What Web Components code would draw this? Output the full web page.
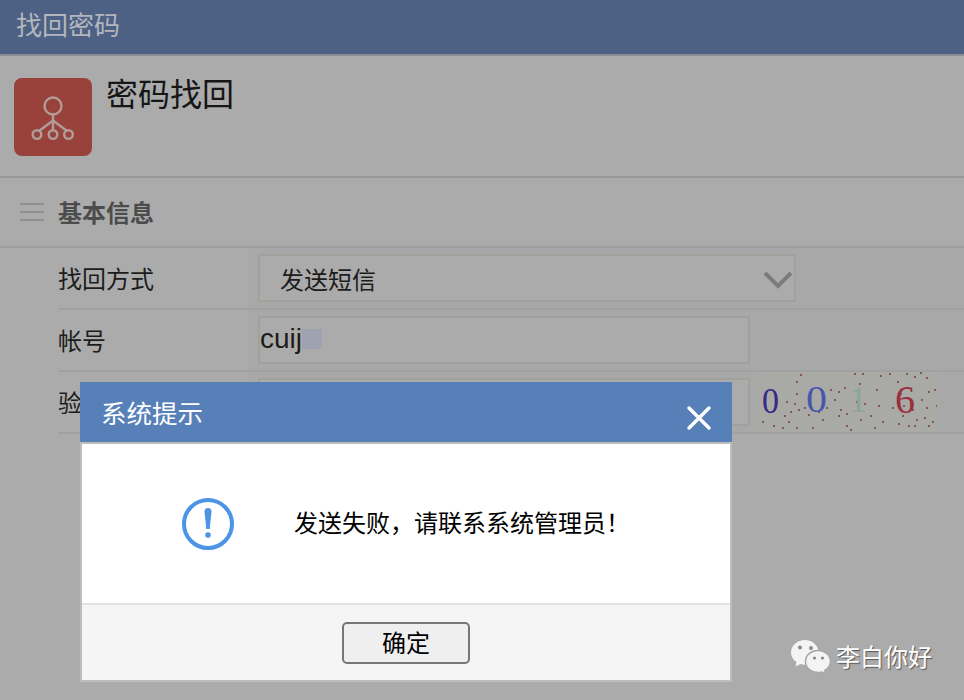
<!DOCTYPE html>
<html lang="zh">
<head>
<meta charset="utf-8">
<title>找回密码</title>
<style>
  html, body { margin: 0; height: 100%; }
  body {
    width: 964px;
    height: 700px;
    overflow: hidden;
    position: relative;
    background: #ababab;
    color: #1a1a1a;
    font-family: "Liberation Sans", "Noto Sans CJK SC", sans-serif;
  }
</style>
</head>
<body>
<app-bar>找回密码</app-bar>
<page-title>密码找回</page-title>
<section-head>基本信息</section-head>
<form-row label="找回方式"><select-box>发送短信</select-box></form-row>
<form-row label="帐号"><text-box>cuij</text-box></form-row>
<form-row label="验证码"><text-box></text-box><captcha-img></captcha-img></form-row>
<modal-dialog heading="系统提示" button="确定">发送失败，请联系系统管理员！</modal-dialog>
<wechat-mark>李白你好</wechat-mark>

<script>
class AppBar extends HTMLElement {
  constructor() {
    super();
    this.attachShadow({ mode: 'open' });
    this.shadowRoot.innerHTML = `
      <style>
        :host {
          display: flex;
          align-items: center;
          box-sizing: border-box;
          height: 56px;
          padding: 0 16px 7px;
          background: #4c6183;
          border-bottom: 2px solid #8b8f95;
          color: #b3b6bc;
          font-size: 26px;
        }
      </style>
      <slot></slot>
    `;
  }
}

class PageTitle extends HTMLElement {
  constructor() {
    super();
    this.attachShadow({ mode: 'open' });
    this.shadowRoot.innerHTML = `
      <style>
        :host {
          display: flex;
          box-sizing: border-box;
          height: 122px;
          padding: 22px 0 0 14px;
          gap: 14px;
          border-bottom: 2px solid #989898;
          color: #161616;
          font-size: 32px;
          line-height: 34px;
        }
        .tile {
          width: 78px;
          height: 78px;
          border-radius: 8px;
          background: #99423b;
        }
        svg { display: block; }
      </style>
      <div class="tile">
        <svg width="78" height="78" viewBox="0 0 78 78" fill="none" stroke="#b09c98" stroke-width="2.4">
          <circle cx="39" cy="28" r="8.5"/>
          <path d="M39 36.5V52M39 42.500L25 53M39 42.500L53 53"/>
          <circle cx="23" cy="56.500" r="4.300" fill="#99423b"/>
          <circle cx="39" cy="56.500" r="4.300" fill="#99423b"/>
          <circle cx="54.500" cy="56.500" r="4.300" fill="#99423b"/>
        </svg>
      </div>
      <div><slot></slot></div>
    `;
  }
}

class SectionHead extends HTMLElement {
  constructor() {
    super();
    this.attachShadow({ mode: 'open' });
    this.shadowRoot.innerHTML = `
      <style>
        :host {
          display: flex;
          align-items: center;
          box-sizing: border-box;
          height: 70px;
          padding: 0 0 0 20px;
          gap: 14px;
          border-bottom: 2px solid #9d9d9d;
          color: #4c4c4c;
          font-size: 24px;
          font-weight: 700;
        }
        i {
          display: block;
          width: 24px;
          height: 14px;
          border-top: 2px solid #8f8f8f;
          border-bottom: 2px solid #8f8f8f;
          position: relative;
        }
        i::after {
          content: "";
          position: absolute;
          left: 0;
          right: 0;
          top: 6px;
          height: 2px;
          background: #8f8f8f;
        }
        div { padding-bottom: 2px; }
      </style>
      <i></i><div><slot></slot></div>
    `;
  }
}

class FormRow extends HTMLElement {
  constructor() {
    super();
    this.attachShadow({ mode: 'open' });
    this.shadowRoot.innerHTML = `
      <style>
        :host {
          display: grid;
          grid-template-columns: 248px 1fr;
          height: 62px;
          box-sizing: border-box;
        }
        .label {
          margin-left: 58px;
          padding-bottom: 1px;
          display: flex;
          align-items: center;
          border-bottom: 2px solid #a1a1a1;
          font-size: 24px;
          color: #1c1c1c;
        }
        .value {
          display: flex;
          align-items: center;
          gap: 7px;
          padding-left: 10px;
          background: #a8a8a8;
          border-bottom: 2px solid #a1a1a1;
        }
      </style>
      <div class="label"></div>
      <div class="value"><slot></slot></div>
    `;
    this.shadowRoot.querySelector('.label').textContent = this.getAttribute('label');
  }
}

class SelectBox extends HTMLElement {
  constructor() {
    super();
    this.attachShadow({ mode: 'open' });
    this.shadowRoot.innerHTML = `
      <style>
        :host {
          display: flex;
          align-items: center;
          justify-content: space-between;
          box-sizing: border-box;
          width: 538px;
          height: 48px;
          padding: 1px 1px 0 20px;
          border: 2px solid #a2a29c;
          background: #ababab;
          color: #1c1c1c;
          font-size: 24px;
        }
        svg { display: block; margin-top: 2px; }
      </style>
      <slot></slot>
      <svg width="30" height="20" viewBox="0 0 30 20" fill="none" stroke="#7c7c7c" stroke-width="4">
        <path d="M2 3L15 16L28 3"/>
      </svg>
    `;
  }
}

class TextBox extends HTMLElement {
  constructor() {
    super();
    this.attachShadow({ mode: 'open' });
    this.shadowRoot.innerHTML = `
      <style>
        :host {
          display: flex;
          align-items: center;
          box-sizing: border-box;
          width: 492px;
          height: 48px;
          padding: 0 0 2px;
          border: 2px solid #a2a29c;
          background: #ababab;
          color: #1c1c1c;
          font-size: 28px;
        }
        i { display: block; width: 20px; height: 20px; background: #9fa3b1; }
        :host(:empty) i { display: none; }
      </style>
      <slot></slot><i></i>
    `;
  }
}

class CaptchaImg extends HTMLElement {
  constructor() {
    super();
    this.attachShadow({ mode: 'open' });
    // scattered noise dots, same as the server rendered image
    const pts = [[6,50],[17,54],[40,10],[44,3],[40,22],[38,32],[42,38],[48,36],[62,40],[28,44],[32,50],[26,56],[52,43],[90,42],[94,58],[82,20],[88,16],[98,2],[106,2],[103,12],[124,4],[133,2],[120,18],[108,32],[104,48],[114,44],[118,56],[150,2],[158,5],[164,1],[170,6],[144,22],[141,10],[147,34],[136,36],[142,52],[146,44],[160,48],[168,46],[176,50],[172,54],[165,28],[172,20],[178,18],[180,34],[156,38],[170,36],[40,56],[66,48],[70,36],[82,44],[90,54],[74,18],[78,28],[56,56],[30,30],[34,40],[152,54],[158,54],[122,34],[126,50],[100,30],[84,38]];
    const dots = pts.map(p => `<circle cx="${p[0]}" cy="${p[1]}" r="0.9" fill="#7a3038"/>`).join('');
    this.shadowRoot.innerHTML = `
      <style>
        :host { display: block; width: 180px; height: 60px; }
        svg { display: block; background: #a9a9a6; }
        text { font-family: "Liberation Serif", serif; }
      </style>
      <svg width="180" height="60" viewBox="0 0 180 60">
        ${dots}
        <text x="5" y="41" fill="#3b2689" style="font-size:36px" textLength="17" lengthAdjust="spacingAndGlyphs">0</text>
        <text x="49" y="40" fill="#4a55ad" style="font-size:38px" textLength="21" lengthAdjust="spacingAndGlyphs">0</text>
        <text x="92" y="40" fill="#8ba596" style="font-size:36px">1</text>
        <text x="138" y="41" fill="#99303f" style="font-size:40px">6</text>
      </svg>
    `;
  }
}

class ModalDialog extends HTMLElement {
  constructor() {
    super();
    this.attachShadow({ mode: 'open' });
    this.shadowRoot.innerHTML = `
      <style>
        :host {
          position: absolute;
          left: 80px;
          top: 382px;
          width: 652px;
          height: 300px;
          display: flex;
          flex-direction: column;
          box-sizing: border-box;
          border: 2px solid #bdbdbd;
          border-top: 0;
          background: #fff;
          color: #000;
          font-size: 24px;
        }
        .head {
          height: 60px;
          margin: 0 -2px;
          padding: 0 20px 0 21px;
          display: flex;
          align-items: center;
          justify-content: space-between;
          background: #5880b8;
          color: #fff;
          font-size: 25.5px;
        }
        .heading { padding-bottom: 2px; }
        .head svg { margin-top: 12px; }
        .body {
          flex: 1;
          display: flex;
          align-items: center;
          padding: 0 0 0 100px;
          gap: 60px;
          border-top: 2px solid #bdbdbd;
          border-bottom: 2px solid #dfe3e8;
        }
        .msg { padding-bottom: 4px; }
        .foot {
          height: 75px;
          display: flex;
          align-items: center;
          justify-content: center;
          background: #f5f5f6;
        }
        button {
          width: 128px;
          height: 42px;
          padding: 0 0 2px;
          border: 2px solid #767676;
          border-radius: 5px;
          background: #efefef;
          color: #000;
          font: inherit;
        }
        svg { display: block; }
      </style>
      <div class="head">
        <span class="heading"></span>
        <svg width="26" height="26" viewBox="0 0 26 26" stroke="#fff" stroke-width="3.4" stroke-linecap="round">
          <path d="M3 3L23 23M23 3L3 23"/>
        </svg>
      </div>
      <div class="body">
        <svg width="52" height="52" viewBox="0 0 52 52">
          <circle cx="26" cy="26" r="24" fill="none" stroke="#4b94e6" stroke-width="4"/>
          <path d="M22.500 13.500a3.500 3.500 0 0 1 7 0L27.700 31h-3.400Z" fill="#4b94e6"/>
          <circle cx="26" cy="37" r="2.800" fill="#4b94e6"/>
        </svg>
        <span class="msg"><slot></slot></span>
      </div>
      <div class="foot"><button></button></div>
    `;
    this.shadowRoot.querySelector('.heading').textContent = this.getAttribute('heading');
    this.shadowRoot.querySelector('button').textContent = this.getAttribute('button');
  }
}

class WechatMark extends HTMLElement {
  constructor() {
    super();
    this.attachShadow({ mode: 'open' });
    this.shadowRoot.innerHTML = `
      <style>
        :host {
          position: absolute;
          left: 790px;
          top: 638px;
          display: flex;
          align-items: center;
          gap: 5px;
          color: #fff;
          font-size: 24px;
          text-shadow: 1px 1px 1px #555;
        }
        svg { display: block; }
        div { padding-bottom: 2px; }
      </style>
      <svg width="41" height="36" viewBox="0 0 41 36">
        <path d="M15 1C7.500 1 1 6.500 1 13.500C1 17.500 3.200 20.800 6.500 23L5.500 27.500L10.500 25C12 25.400 13.500 25.700 15 25.700C22 25.700 28.500 20 28.500 13.500C28.500 6.500 22.500 1 15 1Z" fill="#f4f4f4"/>
        <path d="M28 11.500C21 11.500 15.500 16 15.500 22.500C15.500 29 21 33.500 28 33.500C29.300 33.500 30.500 33.300 31.800 32.900L35.500 35L34.800 31.300C38 29.300 40.500 26.300 40.500 22.500C40.500 16 35 11.500 28 11.500Z" fill="#f4f4f4" stroke="#a8a8a8" stroke-width="1.500"/>
        <circle cx="10" cy="8.500" r="2" fill="#8a8a8a"/>
        <circle cx="21" cy="9" r="2" fill="#8a8a8a"/>
        <circle cx="24.500" cy="19" r="1.600" fill="#8a8a8a"/>
        <circle cx="32.500" cy="19" r="1.600" fill="#8a8a8a"/>
      </svg>
      <div><slot></slot></div>
    `;
  }
}

customElements.define('app-bar', AppBar);
customElements.define('page-title', PageTitle);
customElements.define('section-head', SectionHead);
customElements.define('form-row', FormRow);
customElements.define('select-box', SelectBox);
customElements.define('text-box', TextBox);
customElements.define('captcha-img', CaptchaImg);
customElements.define('modal-dialog', ModalDialog);
customElements.define('wechat-mark', WechatMark);
</script>
</body>
</html>
